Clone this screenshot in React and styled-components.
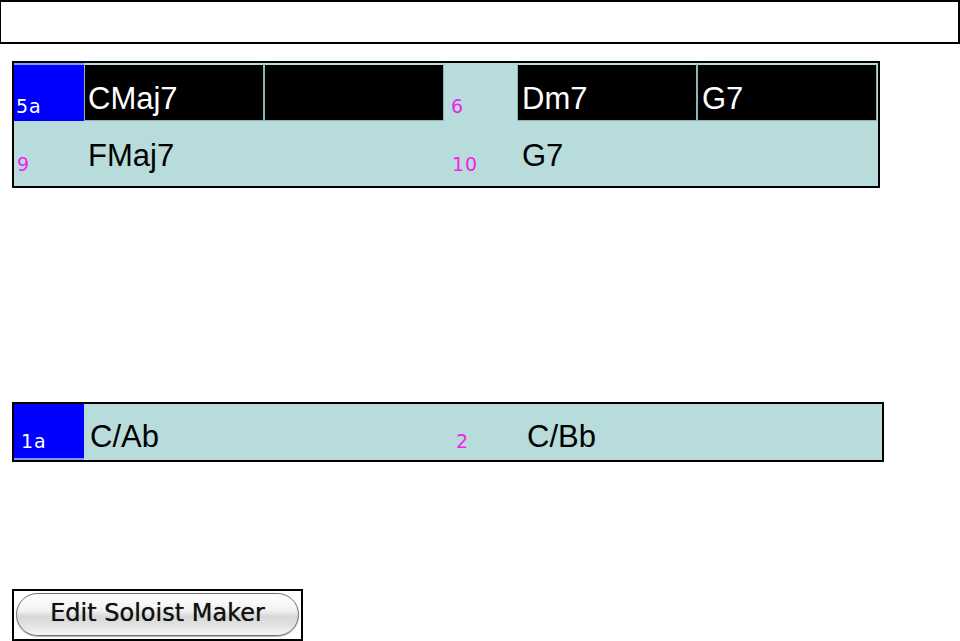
import React from "react";
import styled, { createGlobalStyle } from "styled-components";

const Global = createGlobalStyle`
  html, body {
    margin: 0;
    padding: 0;
    background: #fff;
  }
`;

const Page = styled.div`
  width: 960px;
  height: 641px;
  overflow: hidden;
  display: flex;
  flex-direction: column;
  align-items: flex-start;
`;

const TopBox = styled.div`
  box-sizing: border-box;
  width: 960px;
  height: 44px;
  border: 2px solid #000;
  border-left-width: 1px;
`;

const Panel = styled.div`
  box-sizing: border-box;
  margin: ${(p) => p.$top}px 0 0 12px;
  width: ${(p) => p.$w}px;
  border: 2px solid #000;
  background: #b8dcdc;
  display: flex;
  flex-direction: column;
`;

const Row = styled.div`
  display: flex;
  height: ${(p) => p.$h}px;
`;

const NumCell = styled.div`
  box-sizing: border-box;
  width: ${(p) => p.$w}px;
  flex: none;
  display: flex;
  align-items: flex-end;
  padding: 0 0 ${(p) => p.$pb}px ${(p) => p.$pl}px;
  font-family: "DejaVu Sans", sans-serif;
  font-size: 19px;
  line-height: 1;
  letter-spacing: 1px;
  color: ${(p) => (p.$blue ? "#fff" : "#f21ef2")};
  background: ${(p) => (p.$blue ? "#0000ff" : "transparent")};
  border-top: ${(p) => (p.$blue && p.$edge === "top" ? "2px solid #7f9cff" : "none")};
  border-bottom: ${(p) => (p.$blue && p.$edge === "bottom" ? "2px solid #7f9cff" : "none")};
`;

const ChordCell = styled.div`
  box-sizing: border-box;
  width: ${(p) => p.$w}px;
  flex: none;
  display: flex;
  align-items: flex-end;
  padding: 0 0 ${(p) => p.$pb}px ${(p) => p.$pl}px;
  font-family: "Liberation Sans", Arial, sans-serif;
  font-size: 31px;
  line-height: 1;
  color: ${(p) => (p.$dark ? "#fff" : "#000")};
  background: ${(p) => (p.$dark ? "#000" : "transparent")};
  border: ${(p) => (p.$dark ? "1px solid #8fb5b2" : "none")};
  border-top-width: ${(p) => (p.$dark ? "2px" : "0")};
  border-top-color: #b8dcdc;
`;

const ButtonFrame = styled.div`
  box-sizing: border-box;
  margin: 127px 0 0 12px;
  width: 291px;
  height: 53px;
  border: 2px solid #000;
  padding: 2px 2px 3px 2px;
  display: flex;
`;

const PillButton = styled.button`
  flex: 1;
  border: 1px solid #6e6e6e;
  border-radius: 22px;
  background: linear-gradient(
    to bottom,
    #ffffff 0%,
    #f2f2f2 40%,
    #d8d8d8 55%,
    #e4e4e4 80%,
    #f6f6f6 100%
  );
  box-shadow: inset 0 1px 0 #fff, 0 1px 1px rgba(0, 0, 0, 0.3);
  font-family: "DejaVu Sans", sans-serif;
  font-size: 24px;
  color: #111;
  text-shadow: 0 0 0.7px rgba(0, 0, 0, 0.7);
  padding: 0 0 2px 0;
  cursor: pointer;
`;

export default function App() {
  return (
    <Page>
      <Global />
      <TopBox />

      <Panel $top={17} $w={868}>
        <Row $h={58}>
          <NumCell $w={70} $blue $edge="top" $pl={2} $pb={5}>5a</NumCell>
          <ChordCell $w={180} $dark $pl={3} $pb={6}>CMaj7</ChordCell>
          <ChordCell $w={180} $dark $pl={3} $pb={6} />
          <NumCell $w={73} $pl={7} $pb={5}>6</NumCell>
          <ChordCell $w={180} $dark $pl={4} $pb={6}>Dm7</ChordCell>
          <ChordCell $w={180} $dark $pl={4} $pb={6}>G7</ChordCell>
        </Row>
        <Row $h={65}>
          <NumCell $w={70} $pl={3} $pb={12}>9</NumCell>
          <ChordCell $w={360} $pl={4} $pb={15}>FMaj7</ChordCell>
          <NumCell $w={73} $pl={8} $pb={12}>10</NumCell>
          <ChordCell $w={360} $pl={5} $pb={15}>G7</ChordCell>
        </Row>
      </Panel>

      <Panel $top={214} $w={872}>
        <Row $h={56}>
          <NumCell $w={70} $blue $edge="bottom" $pl={7} $pb={7}>1a</NumCell>
          <ChordCell $w={366} $pl={6} $pb={8}>C/Ab</ChordCell>
          <NumCell $w={73} $pl={6} $pb={9}>2</NumCell>
          <ChordCell $w={355} $pl={4} $pb={8}>C/Bb</ChordCell>
        </Row>
      </Panel>

      <ButtonFrame>
        <PillButton>Edit Soloist Maker</PillButton>
      </ButtonFrame>
    </Page>
  );
}
